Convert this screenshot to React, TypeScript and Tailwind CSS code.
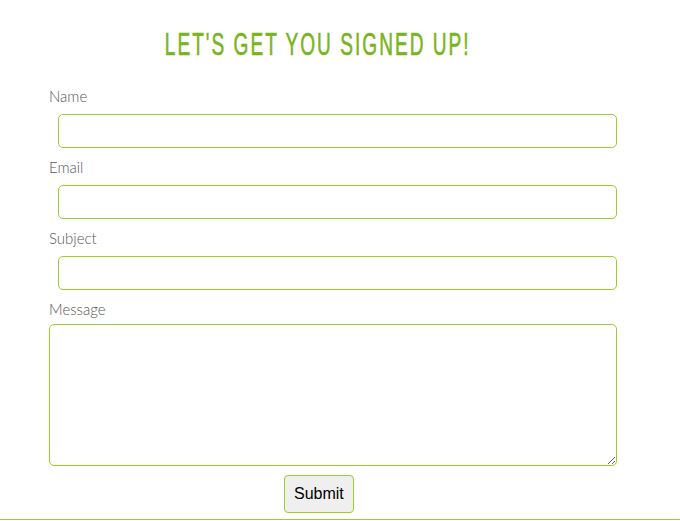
export default function App() {
  const fields = ["Name", "Email", "Subject"];

  return (
    <div className="w-[680px] h-[521px] bg-white overflow-hidden">
      <div className="h-[520px] border-b border-[#9acd32] flex flex-col">
        <div className="w-[635px] pt-[28px] text-center">
          <h1 className="inline-block scale-x-[0.615] text-[31px] leading-[34px] tracking-[3.3px] text-[#78b41e] font-['Liberation_Sans',sans-serif] [-webkit-text-stroke:0.6px_#78b41e]">
            LET'S GET YOU SIGNED UP!
          </h1>
        </div>

        <form className="w-[568px] ml-[49px] mt-[27px] flex flex-col font-['Lato',sans-serif] font-light text-[15px] text-[#555]">
          {fields.map((f) => (
            <div key={f} className="flex flex-col">
              <label className="leading-[14px] h-[20px]">{f}</label>
              <input
                type="text"
                className="ml-[9px] mt-[5px] mb-[12px] h-[34px] w-[559px] rounded-[5px] border border-[#9acd32] outline-none"
              />
            </div>
          ))}
          <label className="leading-[14px] h-[20px]">Message</label>
          <textarea className="mt-[2px] h-[142px] w-[568px] rounded-[5px] border border-[#9acd32] outline-none" />
          <div className="flex mt-[9px] pl-[235px]">
            <button
              type="button"
              className="h-[38px] px-[9px] rounded-[4px] border border-[#9acd32] bg-[#efefef] text-black text-[16px] font-normal font-['Liberation_Sans',Arial,sans-serif]"
            >
              Submit
            </button>
          </div>
        </form>
      </div>
    </div>
  );
}
